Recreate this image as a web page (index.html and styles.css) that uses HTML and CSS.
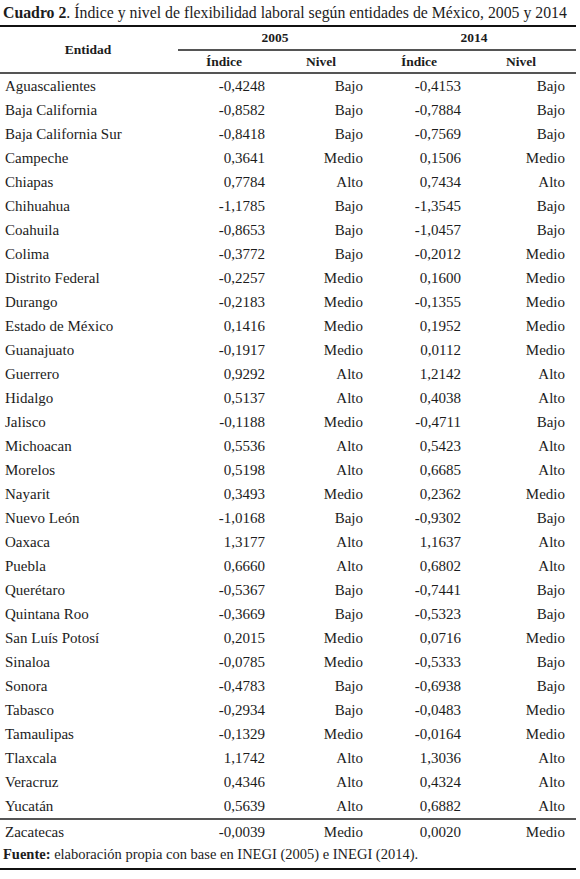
FILE: index.html
```html
<!DOCTYPE html>
<html lang="es">
<head>
<meta charset="utf-8">
<title>Cuadro 2</title>
<link rel="stylesheet" href="styles.css">
</head>
<body>
<div class="wrap">
  <div class="title"><b>Cuadro 2</b>. Índice y nivel de flexibilidad laboral según entidades de México, 2005 y 2014</div>
  <table class="tbl">
    <colgroup>
      <col class="c-ent"><col class="c-i1"><col class="c-n1"><col class="c-i2"><col class="c-n2">
    </colgroup>
    <thead>
      <tr class="h1">
        <th rowspan="2" class="ent-h">Entidad</th>
        <th colspan="2" class="yr">2005</th>
        <th colspan="2" class="yr">2014</th>
      </tr>
      <tr class="h2">
        <th>Índice</th><th>Nivel</th><th>Índice</th><th>Nivel</th>
      </tr>
    </thead>
    <tbody>
      <tr><td>Aguascalientes</td><td>-0,4248</td><td>Bajo</td><td>-0,4153</td><td>Bajo</td></tr>
      <tr><td>Baja California</td><td>-0,8582</td><td>Bajo</td><td>-0,7884</td><td>Bajo</td></tr>
      <tr><td>Baja California Sur</td><td>-0,8418</td><td>Bajo</td><td>-0,7569</td><td>Bajo</td></tr>
      <tr><td>Campeche</td><td>0,3641</td><td>Medio</td><td>0,1506</td><td>Medio</td></tr>
      <tr><td>Chiapas</td><td>0,7784</td><td>Alto</td><td>0,7434</td><td>Alto</td></tr>
      <tr><td>Chihuahua</td><td>-1,1785</td><td>Bajo</td><td>-1,3545</td><td>Bajo</td></tr>
      <tr><td>Coahuila</td><td>-0,8653</td><td>Bajo</td><td>-1,0457</td><td>Bajo</td></tr>
      <tr><td>Colima</td><td>-0,3772</td><td>Bajo</td><td>-0,2012</td><td>Medio</td></tr>
      <tr><td>Distrito Federal</td><td>-0,2257</td><td>Medio</td><td>0,1600</td><td>Medio</td></tr>
      <tr><td>Durango</td><td>-0,2183</td><td>Medio</td><td>-0,1355</td><td>Medio</td></tr>
      <tr><td>Estado de México</td><td>0,1416</td><td>Medio</td><td>0,1952</td><td>Medio</td></tr>
      <tr><td>Guanajuato</td><td>-0,1917</td><td>Medio</td><td>0,0112</td><td>Medio</td></tr>
      <tr><td>Guerrero</td><td>0,9292</td><td>Alto</td><td>1,2142</td><td>Alto</td></tr>
      <tr><td>Hidalgo</td><td>0,5137</td><td>Alto</td><td>0,4038</td><td>Alto</td></tr>
      <tr><td>Jalisco</td><td>-0,1188</td><td>Medio</td><td>-0,4711</td><td>Bajo</td></tr>
      <tr><td>Michoacan</td><td>0,5536</td><td>Alto</td><td>0,5423</td><td>Alto</td></tr>
      <tr><td>Morelos</td><td>0,5198</td><td>Alto</td><td>0,6685</td><td>Alto</td></tr>
      <tr><td>Nayarit</td><td>0,3493</td><td>Medio</td><td>0,2362</td><td>Medio</td></tr>
      <tr><td>Nuevo León</td><td>-1,0168</td><td>Bajo</td><td>-0,9302</td><td>Bajo</td></tr>
      <tr><td>Oaxaca</td><td>1,3177</td><td>Alto</td><td>1,1637</td><td>Alto</td></tr>
      <tr><td>Puebla</td><td>0,6660</td><td>Alto</td><td>0,6802</td><td>Alto</td></tr>
      <tr><td>Querétaro</td><td>-0,5367</td><td>Bajo</td><td>-0,7441</td><td>Bajo</td></tr>
      <tr><td>Quintana Roo</td><td>-0,3669</td><td>Bajo</td><td>-0,5323</td><td>Bajo</td></tr>
      <tr><td>San Luís Potosí</td><td>0,2015</td><td>Medio</td><td>0,0716</td><td>Medio</td></tr>
      <tr><td>Sinaloa</td><td>-0,0785</td><td>Medio</td><td>-0,5333</td><td>Bajo</td></tr>
      <tr><td>Sonora</td><td>-0,4783</td><td>Bajo</td><td>-0,6938</td><td>Bajo</td></tr>
      <tr><td>Tabasco</td><td>-0,2934</td><td>Bajo</td><td>-0,0483</td><td>Medio</td></tr>
      <tr><td>Tamaulipas</td><td>-0,1329</td><td>Medio</td><td>-0,0164</td><td>Medio</td></tr>
      <tr><td>Tlaxcala</td><td>1,1742</td><td>Alto</td><td>1,3036</td><td>Alto</td></tr>
      <tr><td>Veracruz</td><td>0,4346</td><td>Alto</td><td>0,4324</td><td>Alto</td></tr>
      <tr><td>Yucatán</td><td>0,5639</td><td>Alto</td><td>0,6882</td><td>Alto</td></tr>
      <tr class="last"><td>Zacatecas</td><td>-0,0039</td><td>Medio</td><td>0,0020</td><td>Medio</td></tr>
    </tbody>
  </table>
  <div class="source"><b>Fuente:</b> elaboración propia con base en INEGI (2005) e INEGI (2014).</div>
</div>
</body>
</html>
```
FILE: styles.css
```css
html, body {
  margin: 0;
  padding: 0;
  background: #fff;
}
body {
  font-family: "Liberation Serif", "DejaVu Serif", serif;
  color: #1c1c1c;
  font-size: 15px;
}
.wrap {
  width: 576px;
}
.title {
  padding: 3px 0 0 3px;
  height: 22px;
  line-height: 20px;
  font-size: 15.8px;
  border-bottom: 2px solid #111;
  white-space: nowrap;
}
.title b {
  font-weight: bold;
}
.tbl {
  width: 576px;
  border-collapse: collapse;
  table-layout: fixed;
}
.c-ent { width: 178px; }
.c-i1 { width: 92px; }
.c-n1 { width: 102px; }
.c-i2 { width: 94px; }
.c-n2 { width: 110px; }
.tbl th {
  font-weight: bold;
  font-size: 13.5px;
  padding: 0;
  text-align: center;
}
.h1 th {
  height: 22px;
}
.h1 .yr {
  border-bottom: 2px solid #555;
}
.h1 .ent-h {
  border-bottom: 2px solid #555;
  padding-right: 2px;
}
.h2 th {
  height: 21px;
  border-bottom: 2px solid #555;
}
.tbl td {
  height: 24px;
  padding: 0 5px;
  line-height: 24px;
  text-align: right;
  white-space: nowrap;
}
.tbl td:first-child {
  text-align: left;
  padding-left: 5px;
}
.tbl td:nth-child(3) { padding-right: 9px; }
.tbl td:nth-child(5) { padding-right: 11px; }
.tbl tr.last td {
  border-top: 2px solid #555;
}
.source {
  padding: 1px 0 5px 3px;
  line-height: 18px;
  font-size: 14.5px;
  border-bottom: 2px solid #111;
  white-space: nowrap;
}
```
